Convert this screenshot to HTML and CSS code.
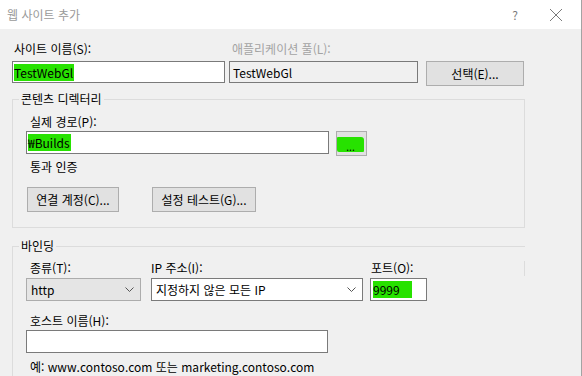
FILE: index.html
```html
<!doctype html>
<html lang="ko">
    <head>
        <meta charset="UTF-8" />
        <title>웹 사이트 추가</title>
        <link rel="stylesheet" href="styles.css">
    </head>
    <body>
        <div class="window">
            <div class="titlebar">
                <span class="title">웹 사이트 추가</span>
                <span class="help">?</span>
                <svg class="close" width="14" height="14" viewBox="0 0 14 14">
                    <path d="M1 1 L13 13 M13 1 L1 13" stroke="#7a7a7a" stroke-width="1" fill="none" />
                </svg>
            </div>

            <div class="dialog">
                <div class="site-row">
                    <div class="field site-name">
                        <div class="label">사이트 이름(S):</div>
                        <div class="input"><span class="mark">TestWebGl</span></div>
                    </div>
                    <div class="field app-pool">
                        <div class="label disabled">애플리케이션 풀(L):</div>
                        <div class="input readonly">TestWebGl</div>
                    </div>
                    <div class="btn pick">선택(E)...</div>
                </div>

                <fieldset class="group content-dir">
                    <legend>콘텐츠 디렉터리</legend>
                    <div class="label">실제 경로(P):</div>
                    <div class="path-row">
                        <div class="input path"><span class="mark">₩Builds</span></div>
                        <div class="btn browse"><span class="mark-btn">...</span></div>
                    </div>
                    <div class="label pass">통과 인증</div>
                    <div class="btn-row">
                        <div class="btn connect">연결 계정(C)...</div>
                        <div class="btn test">설정 테스트(G)...</div>
                    </div>
                </fieldset>

                <fieldset class="group binding">
                    <legend>바인딩</legend>
                    <div class="bind-row">
                        <div class="field type">
                            <div class="label">종류(T):</div>
                            <div class="combo gray">
                                <span>http</span>
                                <svg width="9" height="5" viewBox="0 0 9 5"><path d="M0.5 0.5 L4.5 4.5 L8.5 0.5" stroke="#555" fill="none" /></svg>
                            </div>
                        </div>
                        <div class="field ip">
                            <div class="label">IP 주소(I):</div>
                            <div class="combo">
                                <span>지정하지 않은 모든 IP</span>
                                <svg width="9" height="5" viewBox="0 0 9 5"><path d="M0.5 0.5 L4.5 4.5 L8.5 0.5" stroke="#555" fill="none" /></svg>
                            </div>
                        </div>
                        <div class="field port">
                            <div class="label">포트(O):</div>
                            <div class="input"><span class="mark wide">9999</span></div>
                        </div>
                    </div>
                    <div class="label host-label">호스트 이름(H):</div>
                    <div class="input host"></div>
                    <div class="label example">예: www.contoso.com 또는 marketing.contoso.com</div>
                </fieldset>
            </div>
        </div>
    </body>
</html>
```

FILE: styles.css
```css
html,
body {
    margin: 0;
    padding: 0;
}

body {
    font-family: "Noto Sans CJK KR", sans-serif;
    font-size: 12px;
    line-height: 16px;
    color: #000;
    overflow: hidden;
}

.window {
    width: 582px;
    height: 376px;
    box-sizing: border-box;
    background-color: #f0f0f0;
    border-right: 1px solid #a3a3a3;
    overflow: hidden;
}

.titlebar {
    height: 29px;
    background-color: #fff;
    display: flex;
    align-items: center;
    padding-left: 7px;
}

.title {
    color: #9a9a9a;
    flex: 1;
}

.help {
    color: #7a7a7a;
    margin-right: 31px;
}

.close {
    margin-right: 18px;
}

.dialog {
    padding-top: 12px;
}

.label {
    height: 16px;
    white-space: nowrap;
}

.label.disabled {
    color: #a3a3a3;
}

.input {
    box-sizing: border-box;
    height: 23px;
    background-color: #fff;
    border: 1px solid #7a7a7a;
    padding: 2px 0 0 1px;
    line-height: 17px;
}

.input.readonly {
    background-color: #f0f0f0;
    padding-left: 3px;
}

.mark {
    background-color: #27e200;
    display: inline-block;
    padding-right: 1px;
}

.mark.wide {
    padding-right: 12px;
}

.btn {
    box-sizing: border-box;
    height: 25px;
    background-color: #e1e1e1;
    border: 1px solid #adadad;
    display: flex;
    align-items: center;
    justify-content: center;
}

/* top row */
.site-row {
    display: flex;
    padding-left: 12px;
}

.site-name {
    width: 213px;
}

.site-name .label {
    padding-left: 2px;
}

.site-name .input {
    height: 22px;
}

.app-pool {
    width: 189px;
    margin-left: 4px;
}

.app-pool .label {
    padding-left: 3px;
}

.app-pool .input {
    height: 22px;
}

.field .label {
    margin-bottom: 4px;
}

.pick {
    width: 98px;
    margin-left: 8px;
    margin-top: 20px;
}

/* group boxes */
.group {
    margin: 5px 0 0 12px;
    width: 513px;
    box-sizing: border-box;
    border: 1px solid #dcdcdc;
    padding: 7px 0 15px 13px;
}

.group legend {
    padding: 0 2px;
    margin-left: -7px;
    line-height: 16px;
}

.group > .label {
    padding-left: 4px;
}

.content-dir > .label {
    margin-bottom: 1px;
}

.path-row {
    display: flex;
    align-items: flex-start;
}

.path {
    width: 303px;
}

.browse {
    width: 31px;
    margin-left: 7px;
    align-items: flex-start;
    justify-content: flex-start;
    padding-top: 5px;
}

.mark-btn {
    display: block;
    width: 27px;
    height: 15px;
    background-color: #27e200;
    text-align: center;
    font-size: 10px;
    line-height: 19px;
    border-radius: 1px 3px 1px 2px;
}

.content-dir .pass {
    margin-top: 3px;
}

.btn-row {
    display: flex;
    margin-top: 12px;
    padding-left: 1px;
}

.connect {
    width: 92px;
}

.test {
    width: 104px;
    margin-left: 33px;
}

.binding {
    position: relative;
    margin-top: 10px;
    border-right: none;
    border-bottom: none;
    padding-top: 6px;
}

.binding::after {
    content: "";
    position: absolute;
    right: 0;
    top: 7px;
    width: 1px;
    height: 15px;
    background-color: #dcdcdc;
}

.bind-row {
    display: flex;
}

.bind-row .field .label {
    margin-bottom: 2px;
}

.type {
    width: 115px;
}

.type .label {
    padding-left: 4px;
}

.ip {
    width: 212px;
    margin-left: 10px;
}

.port {
    width: 57px;
    margin-left: 7px;
}

.port .label {
    padding-left: 1px;
}

.port .input {
    padding-left: 2px;
}

.combo {
    box-sizing: border-box;
    height: 23px;
    background-color: #fff;
    border: 1px solid #7a7a7a;
    display: flex;
    align-items: center;
    justify-content: space-between;
    padding: 0 6px 0 4px;
}

.combo.gray {
    background-color: #e5e5e5;
    border-color: #acacac;
}

.binding .host-label {
    margin-top: 12px;
    margin-bottom: 1px;
}

.host {
    width: 302px;
}

.binding .example {
    margin-top: 6px;
}
```
